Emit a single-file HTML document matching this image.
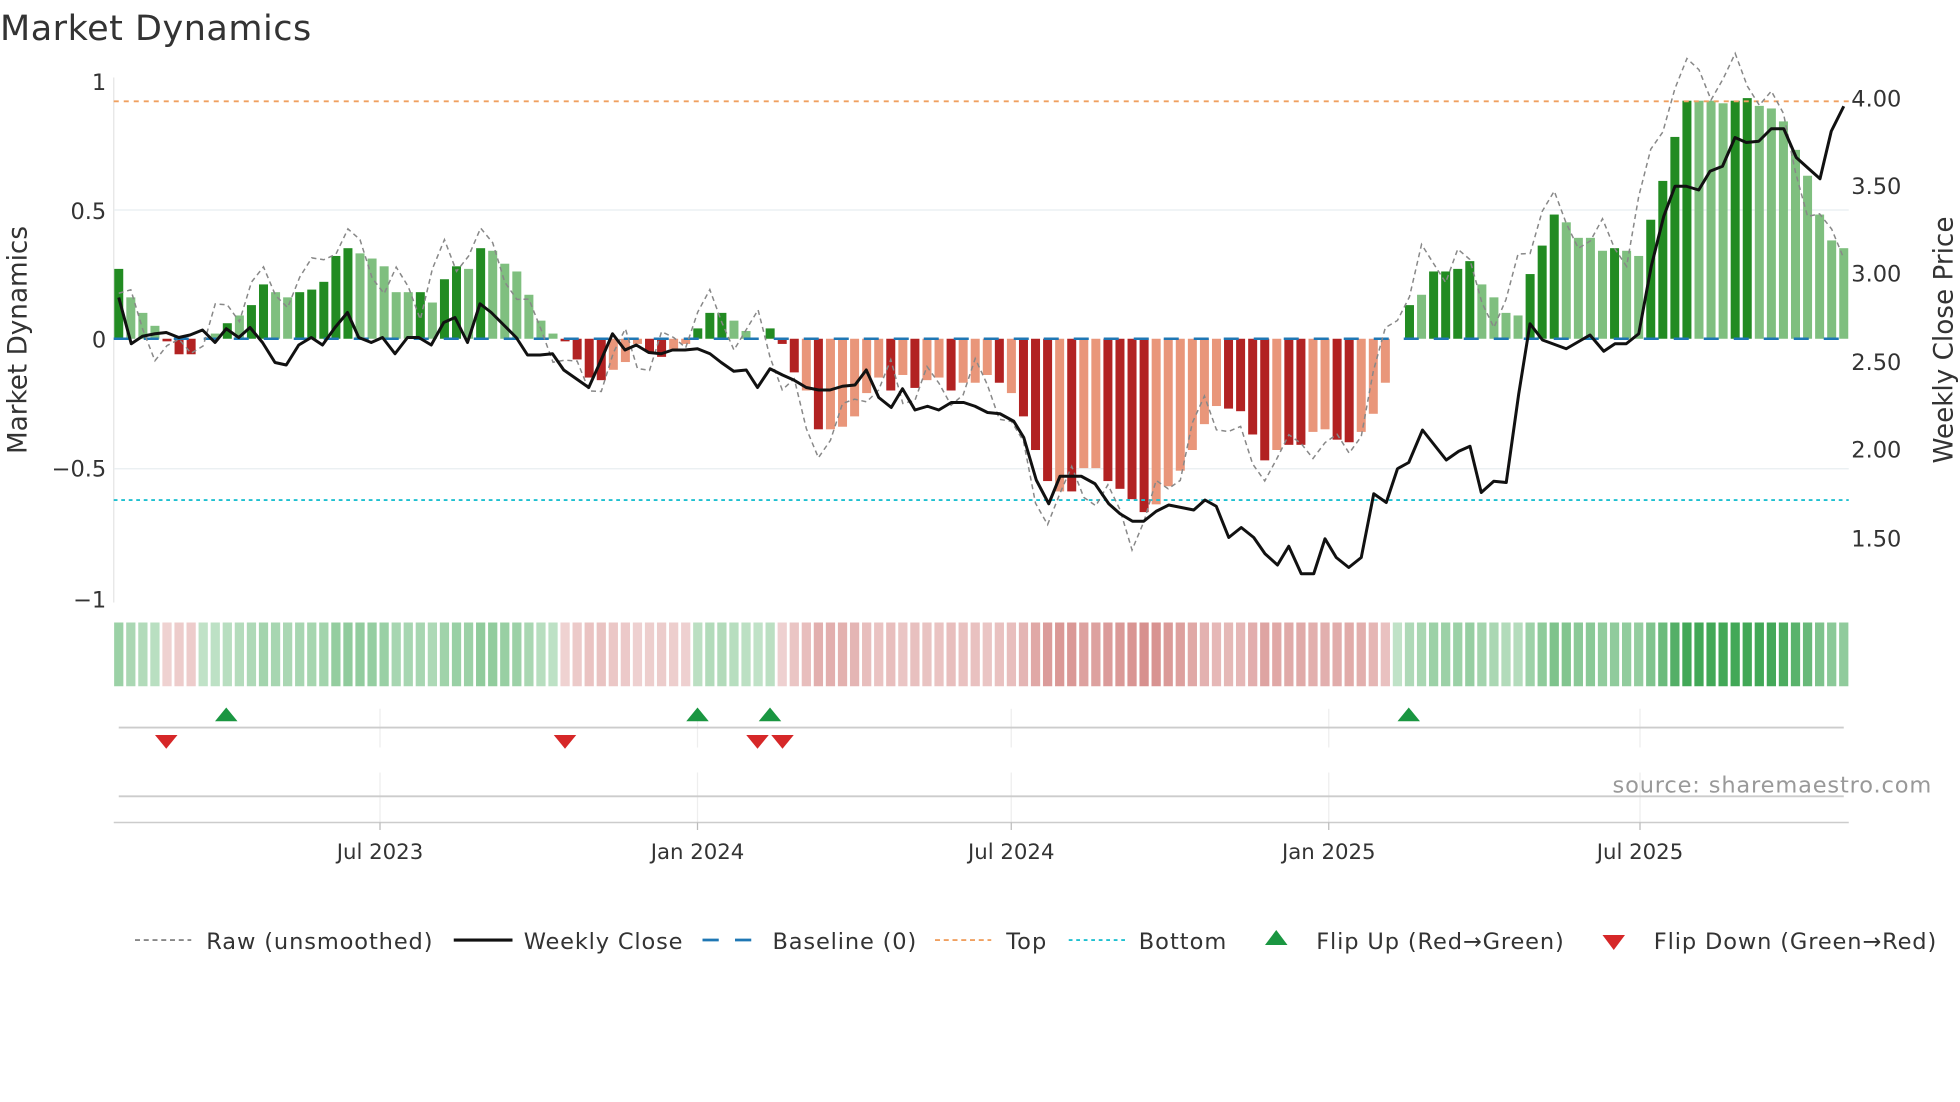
<!DOCTYPE html>
<html><head><meta charset="utf-8"><style>html,body{margin:0;padding:0;background:#fff;}svg{display:block}text{font-family:"DejaVu Sans","Liberation Sans",sans-serif;fill:#333}</style></head>
<body>
<svg id="s" width="1960" height="1102" viewBox="0 0 1568 881.6" xmlns="http://www.w3.org/2000/svg">
<text x="0" y="32" font-size="28" textLength="249">Market Dynamics</text>
<line x1="91" y1="62" x2="91" y2="482" stroke="#e4e4e4" stroke-width="1"/>
<line x1="91" y1="168" x2="1479" y2="168" stroke="#e8eef0" stroke-width="1"/>
<line x1="91" y1="375" x2="1479" y2="375" stroke="#e8eef0" stroke-width="1"/>
<g font-size="18" text-anchor="end">
<text x="85" y="72">1</text><text x="85" y="175">0.5</text><text x="85" y="278">0</text><text x="85" y="381">−0.5</text><text x="85" y="486">−1</text>
</g>
<g font-size="18">
<text x="1481" y="85">4.00</text><text x="1481" y="155">3.50</text><text x="1481" y="225">3.00</text><text x="1481" y="296">2.50</text><text x="1481" y="366">2.00</text><text x="1481" y="437">1.50</text>
</g>
<text transform="translate(21,272) rotate(-90)" font-size="21" text-anchor="middle">Market Dynamics</text>
<text transform="translate(1562,272) rotate(-90)" font-size="21" text-anchor="middle">Weekly Close Price</text>
<g id="bars"></g>
<line x1="91" y1="81" x2="1479" y2="81" stroke="#f0a060" stroke-width="1.5" stroke-dasharray="4,4"/>
<line x1="91" y1="400" x2="1479" y2="400" stroke="#1fc0d0" stroke-width="1.5" stroke-dasharray="3,3"/>
<line x1="91" y1="271" x2="1479" y2="271" stroke="#1f77b4" stroke-width="2" stroke-dasharray="12,12"/>
<polyline id="raw" fill="none" stroke="#888" stroke-width="1.2" stroke-dasharray="4,3"/>
<polyline id="price" fill="none" stroke="#111" stroke-width="2.4" stroke-linejoin="round"/>
<g id="heat"></g>
<g stroke="#eee" stroke-width="1">
<line x1="304" y1="567" x2="304" y2="598"/><line x1="558" y1="567" x2="558" y2="598"/><line x1="809" y1="567" x2="809" y2="598"/><line x1="1063" y1="567" x2="1063" y2="598"/><line x1="1312" y1="567" x2="1312" y2="598"/>
<line x1="304" y1="618" x2="304" y2="658"/><line x1="558" y1="618" x2="558" y2="658"/><line x1="809" y1="618" x2="809" y2="658"/><line x1="1063" y1="618" x2="1063" y2="658"/><line x1="1312" y1="618" x2="1312" y2="658"/>
</g>
<line x1="95" y1="582" x2="1475" y2="582" stroke="#ccc" stroke-width="1.5"/>
<line x1="95" y1="637" x2="1475" y2="637" stroke="#ccc" stroke-width="1.5"/>
<line x1="91" y1="658" x2="1479" y2="658" stroke="#ccc" stroke-width="1.2"/>
<g stroke="#bbb"><line x1="304" y1="658" x2="304" y2="664"/><line x1="558" y1="658" x2="558" y2="664"/><line x1="809" y1="658" x2="809" y2="664"/><line x1="1063" y1="658" x2="1063" y2="664"/><line x1="1312" y1="658" x2="1312" y2="664"/></g>
<g fill="#1a9641"><path d="M181,566 l-9,11 h18z"/><path d="M558,566 l-9,11 h18z"/><path d="M616,566 l-9,11 h18z"/><path d="M1127,566 l-9,11 h18z"/></g>
<g fill="#d62728"><path d="M133,599 l-9,-11 h18z"/><path d="M452,599 l-9,-11 h18z"/><path d="M606,599 l-9,-11 h18z"/><path d="M626,599 l-9,-11 h18z"/></g>
<text x="1545" y="634" font-size="18" text-anchor="end" style="fill:#999" textLength="255">source: sharemaestro.com</text>
<g font-size="17" text-anchor="middle">
<text x="304" y="687">Jul 2023</text><text x="558" y="687">Jan 2024</text><text x="809" y="687">Jul 2024</text><text x="1063" y="687">Jan 2025</text><text x="1312" y="687">Jul 2025</text>
</g>
<g font-size="18">
<line x1="108" y1="752" x2="153" y2="752" stroke="#888" stroke-width="1.5" stroke-dasharray="4,3"/>
<text x="165" y="759" textLength="181">Raw (unsmoothed)</text>
<line x1="363" y1="752" x2="410" y2="752" stroke="#111" stroke-width="2.5"/>
<text x="419" y="759" textLength="127">Weekly Close</text>
<line x1="562" y1="752" x2="607" y2="752" stroke="#1f77b4" stroke-width="2.2" stroke-dasharray="13,13"/>
<text x="618" y="759" textLength="115">Baseline (0)</text>
<line x1="748" y1="752" x2="793" y2="752" stroke="#f0a060" stroke-width="1.5" stroke-dasharray="4,3"/>
<text x="805" y="759" textLength="32">Top</text>
<line x1="855" y1="752" x2="900" y2="752" stroke="#1fc0d0" stroke-width="1.5" stroke-dasharray="3,3"/>
<text x="911" y="759" textLength="70">Bottom</text>
<path d="M1021,744 l-9,12 h18z" fill="#1a9641"/>
<text x="1053" y="759" textLength="198">Flip Up (Red→Green)</text>
<path d="M1291,760 l-9,-12 h18z" fill="#d62728"/>
<text x="1323" y="759" textLength="226">Flip Down (Green→Red)</text>
</g>
</svg>
<script>
var V=[[.27,1],[.16,0],[.10,0],[.05,0],[-.01,1],[-.06,1],[-.06,1],[0,0],[.02,0],[.06,1],[.09,0],[.13,1],[.21,1],[.18,0],[.16,0],[.18,1],[.19,1],[.22,1],[.32,1],[.35,1],[.33,0],[.31,0],[.28,0],[.18,0],[.18,0],[.18,1],[.14,0],[.23,1],[.28,1],[.27,0],[.35,1],[.34,0],[.29,0],[.26,0],[.17,0],[.07,0],[.02,0],[-.01,1],[-.08,1],[-.15,1],[-.16,1],[-.12,0],[-.09,0],[-.02,0],[-.05,1],[-.07,1],[-.04,0],[-.02,0],[.04,1],[.10,1],[.10,1],[.07,0],[.03,0],[0,0],[.04,1],[-.02,1],[-.13,1],[-.20,0],[-.35,1],[-.35,0],[-.34,0],[-.30,0],[-.21,0],[-.15,0],[-.20,1],[-.14,0],[-.19,1],[-.16,0],[-.15,0],[-.20,1],[-.17,0],[-.17,0],[-.14,0],[-.17,1],[-.21,0],[-.30,1],[-.43,1],[-.55,1],[-.59,0],[-.59,1],[-.50,0],[-.50,0],[-.55,1],[-.58,1],[-.62,1],[-.67,1],[-.64,0],[-.57,0],[-.51,0],[-.43,0],[-.33,0],[-.26,0],[-.27,1],[-.28,1],[-.37,1],[-.47,1],[-.43,0],[-.41,1],[-.41,1],[-.36,0],[-.35,0],[-.39,1],[-.40,1],[-.36,0],[-.29,0],[-.17,0],[0,0],[.13,1],[.17,0],[.26,1],[.26,1],[.27,1],[.30,1],[.21,0],[.16,0],[.10,0],[.09,0],[.25,1],[.36,1],[.48,1],[.45,0],[.39,0],[.39,0],[.34,0],[.35,1],[.34,0],[.32,0],[.46,1],[.61,1],[.78,1],[.92,1],[.92,0],[.92,0],[.91,0],[.92,1],[.93,1],[.90,0],[.89,0],[.84,0],[.73,0],[.63,0],[.48,0],[.38,0],[.35,0]];
var N=V.length,x0=95,step=(1475-95)/(N-1),ns="http://www.w3.org/2000/svg";
var bars=document.getElementById('bars'),heat=document.getElementById('heat');
function el(p,t,a){var e=document.createElementNS(ns,t);for(var k in a)e.setAttribute(k,a[k]);p.appendChild(e);return e;}
var raw=[];
for(var i=0;i<N;i++){var v=V[i][0],d=V[i][1],x=x0+i*step,y=271-v*207;
var c=v>=0?(d?'#228b22':'#7fbf7f'):(d?'#b22222':'#e9967a');
if(Math.abs(v)>0.004)el(bars,'rect',{x:x-3.6,y:Math.min(y,271),width:7.2,height:Math.abs(271-y),fill:c});
var a=0.3+Math.min(1,Math.abs(v)/0.9)*0.6;
el(heat,'rect',{x:x-3.7,y:498,width:7.4,height:51,fill:v>=0?'#2e9e45':'#c0504d','fill-opacity':(v>=0?a:a*0.85)});
var n=V[Math.min(N-1,i+1)][0];raw.push(x+','+(271-(n*1.1+0.08*Math.sin(i*1.7))*207).toFixed(1));}
document.getElementById('raw').setAttribute('points',raw.join(' '));
var P=[[95,238],[105,275],[114,269],[124,267],[133,266],[143,270],[152,268],[162,264],[172,274],[181,263],[191,270],[200,262],[210,274],[220,290],[229,292],[239,276],[249,270],[258,276],[268,262],[278,250],[287,270],[297,274],[306,270],[316,283],[326,270],[335,270],[345,276],[355,258],[364,254],[374,274],[384,243],[393,250],[403,260],[413,270],[422,284],[432,284],[442,283],[451,296],[461,303],[471,310],[480,290],[490,267],[500,280],[509,276],[519,282],[529,283],[538,280],[548,280],[558,279],[568,283],[577,290],[587,297],[597,296],[606,310],[616,295],[626,300],[635,304],[645,310],[655,312],[664,312],[674,309],[684,308],[693,296],[703,318],[713,326],[722,311],[732,328],[742,325],[751,328],[761,322],[771,322],[780,325],[790,330],[800,331],[811,337],[819,350],[829,384],[839,403],[848,381],[865,381],[876,387],[887,403],[896,411],[906,417],[915,417],[925,409],[935,404],[955,408],[964,400],[973,405],[983,430],[993,422],[1003,430],[1012,443],[1022,452],[1031,437],[1041,459],[1051,459],[1060,431],[1069,446],[1079,454],[1089,446],[1099,395],[1109,402],[1118,375],[1127,370],[1138,344],[1157,368],[1167,361],[1176,357],[1185,394],[1195,385],[1205,386],[1215,315],[1224,259],[1234,272],[1253,279],[1272,268],[1283,281],[1292,275],[1301,275],[1311,267],[1321,213],[1331,173],[1340,149],[1349,149],[1359,152],[1368,137],[1378,133],[1388,110],[1397,114],[1407,113],[1417,103],[1427,103],[1437,126],[1447,135],[1456,143],[1465,105],[1475,85]];
document.getElementById('price').setAttribute('points',P.map(function(p){return p[0]+','+p[1]}).join(' '));
</script>
</body></html>
